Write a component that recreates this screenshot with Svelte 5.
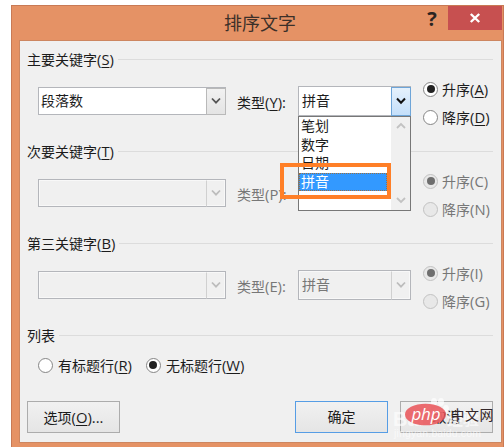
<script>
    // Los tres niveles de ordenación del diálogo
    const levels = [
        { title: '主要关键字', key: 'S', field: '段落数', typeKey: 'Y', type: '拼音', asc: 'A', desc: 'D', enabled: true },
        { title: '次要关键字', key: 'T', field: '', typeKey: 'P', type: '', asc: 'C', desc: 'N', enabled: false },
        { title: '第三关键字', key: 'B', field: '', typeKey: 'E', type: '拼音', asc: 'I', desc: 'G', enabled: false }
    ];

    const options = ['笔划', '数字', '日期', '拼音'];
    let orders = $state(['asc', 'asc', 'asc']);
    let header = $state('none');
    let selected = $state('拼音');
</script>

{#snippet hot(key, enabled)}<span class="lat">({#if enabled}<u>{key}</u>{:else}{key}{/if})</span>{/snippet}

{#snippet arrow()}
    <span class="arrow">
        <svg width="10" height="8" viewBox="0 0 10 8"><path d="M1 1.5 L5 5.7 L9 1.5" /></svg>
    </span>
{/snippet}

{#snippet dot(on)}<span class="dot" class:on></span>{/snippet}

<div class="window">
    <header>
        <h1>排序文字</h1>
        <span class="help">?</span>
        <button class="close" aria-label="关闭">
            <svg width="12" height="10" viewBox="0 0 12 10"><path d="M1.8 1 L10.2 9 M10.2 1 L1.8 9" /></svg>
        </button>
    </header>

    <main>
        {#each levels as level, i}
            <section class:disabled={!level.enabled}>
                <h2><span>{level.title}{@render hot(level.key, true)}</span></h2>
                <div class="row">
                    <div class="combo field"><span class="value">{level.field}</span>{@render arrow()}</div>
                    <span class="label">类型{@render hot(level.typeKey, level.enabled)}<span class="lat">:</span></span>
                    <div class="combo type" class:open={level.enabled}>
                        <span class="value">{i === 0 ? selected : level.type}</span>{@render arrow()}
                        {#if level.enabled}
                            <div class="list">
                                <div class="items">
                                    {#each options as option}
                                        <button class="item" class:selected={option === selected} onclick={() => (selected = option)}>{option}</button>
                                    {/each}
                                </div>
                                <div class="scroll">
                                    <svg width="10" height="8" viewBox="0 0 10 8"><path d="M1 6 L5 2 L9 6" /></svg>
                                    <svg width="10" height="8" viewBox="0 0 10 8"><path d="M1 2 L5 6 L9 2" /></svg>
                                </div>
                                <div class="mark"></div>
                            </div>
                        {/if}
                    </div>
                    <div class="radios">
                        <button class="radio" onclick={() => (orders[i] = 'asc')}>{@render dot(orders[i] === 'asc')}<span>升序{@render hot(level.asc, level.enabled)}</span></button>
                        <button class="radio" onclick={() => (orders[i] = 'desc')}>{@render dot(orders[i] === 'desc')}<span>降序{@render hot(level.desc, level.enabled)}</span></button>
                    </div>
                </div>
            </section>
        {/each}

        <section class="table">
            <h2><span>列表</span></h2>
            <div class="header-rows">
                <button class="radio" onclick={() => (header = 'has')}>{@render dot(header === 'has')}<span>有标题行{@render hot('R', true)}</span></button>
                <button class="radio" onclick={() => (header = 'none')}>{@render dot(header === 'none')}<span>无标题行{@render hot('W', true)}</span></button>
            </div>
        </section>

        <footer>
            <button class="btn">选项{@render hot('O', true)}<span class="lat">...</span></button>
            <button class="btn ok">确定</button>
            <button class="btn cancel">取消
                <span class="baidu">
                    <svg width="100" height="46" viewBox="0 0 100 46">
                        <g class="paw">
                            <ellipse cx="41" cy="5" rx="3" ry="4" />
                            <ellipse cx="48" cy="5" rx="3" ry="4" />
                            <ellipse cx="35" cy="11" rx="3" ry="4" />
                            <ellipse cx="53" cy="12" rx="3" ry="4" />
                            <ellipse cx="44" cy="18" rx="7" ry="7" />
                        </g>
                        <text x="0" y="29" class="brand">Bai</text>
                        <text x="54" y="28" class="brand cn">经验</text>
                        <text x="1" y="40" class="url" textLength="87">jingyan.baidu.com</text>
                    </svg>
                </span>
                <span class="php">
                    <svg width="96" height="26" viewBox="0 0 96 26">
                        <ellipse cx="20.5" cy="12.5" rx="20.5" ry="10.8" />
                        <text x="6.5" y="18" class="logo" textLength="29">php</text>
                        <text x="45.5" y="17.5" class="site" textLength="43">中文网</text>
                    </svg>
                </span>
            </button>
        </footer>
    </main>
</div>

<style>
    :global(body) {
        background: #fff;
        overflow: hidden;
    }

    .window {
        box-sizing: border-box;
        width: 493px;
        height: 442px;
        margin: 5px 0 0 11px;
        padding: 0 1px 0 7px;
        background: #e59265;
        border: 1px solid #c87a55;
        border-bottom: none;
        color: #1c1c1c;
        font: 14px/20px "Open Sans", "Noto Sans CJK SC", sans-serif;
    }

    header {
        display: flex;
        height: 34px;
    }

    h1 {
        flex: 1;
        margin: 0;
        padding-left: 205px;
        color: #3c3029;
        font: 18px/32px "Noto Sans CJK SC", sans-serif;
    }

    .help {
        width: 32px;
        color: #2b2421;
        font: bold 20px/26px "Open Sans", sans-serif;
        text-align: center;
    }

    .close {
        display: flex;
        align-items: center;
        justify-content: center;
        width: 54px;
        height: 24px;
        background: #c75050;
    }

    .close path {
        fill: none;
        stroke: #fff;
        stroke-width: 2.4;
    }

    button {
        margin: 0;
        padding: 0;
        border: none;
        background: none;
        color: inherit;
        font: inherit;
    }

    main {
        box-sizing: border-box;
        height: 403px;
        padding: 9px 8px 0 7px;
        background: #f0f0f0;
        border: 1px solid #cd8660;
    }

    section {
        height: 92px;
    }

    h2 {
        display: flex;
        align-items: center;
        gap: 4px;
        margin: 0;
        height: 19px;
        font: inherit;
    }

    h2::after {
        content: '';
        flex: 1;
        height: 1px;
        background: #dcdcdc;
    }

    .lat {
        font-size: 14.8px;
    }

    u {
        text-underline-offset: 2px;
        text-decoration-thickness: 1px;
    }

    .row {
        display: flex;
        align-items: flex-start;
        padding: 10px 0 0 11px;
    }

    .combo {
        position: relative;
        display: flex;
        box-sizing: border-box;
        border: 1px solid #b4b6bb;
        background: #fff;
    }

    .field {
        width: 188px;
        height: 28px;
        margin-top: 8px;
    }

    .type {
        width: 113px;
        height: 30px;
        margin-top: 7px;
    }

    .value {
        flex: 1;
        padding-left: 2px;
        line-height: 25px;
    }

    .type .value {
        padding-left: 3px;
        line-height: 28px;
    }

    .arrow {
        display: flex;
        align-items: center;
        justify-content: center;
        width: 18px;
        border: 1px solid #b9b9b9;
        margin: -0.5px;
        background: linear-gradient(#f1f1f1, #e4e4e4);
    }

    .arrow path,
    .scroll path {
        fill: none;
        stroke: #555;
        stroke-width: 1.8;
    }

    .open .arrow {
        border-color: #6ea5d8;
        background: linear-gradient(#e5f1fc, #c4dffa);
    }

    .open .arrow path {
        stroke: #111;
        stroke-width: 2;
    }

    .label {
        box-sizing: border-box;
        flex: 0 0 72px;
        padding-left: 11px;
        margin-top: 13px;
        white-space: nowrap;
    }

    .disabled .row {
        color: #777;
    }

    .disabled .combo {
        background: #f0f0f0;
        box-shadow: inset 0 0 0 1px #f8f8f8;
    }

    .disabled .arrow {
        border-color: transparent transparent transparent #d0d0d0;
        background: none;
    }

    .disabled .arrow path {
        stroke: #bcbcbc;
    }

    .radios {
        display: flex;
        flex-direction: column;
        gap: 8px;
        padding-left: 12px;
    }

    .radio {
        display: flex;
        align-items: center;
        gap: 5px;
        height: 20px;
        white-space: nowrap;
    }

    .radios .radio {
        gap: 4px;
    }

    .dot {
        display: flex;
        align-items: center;
        justify-content: center;
        box-sizing: border-box;
        width: 15px;
        height: 15px;
        border: 1px solid #858585;
        border-radius: 50%;
        background: #fff;
    }

    .dot.on::after {
        content: '';
        width: 8px;
        height: 8px;
        border-radius: 50%;
        background: #222;
    }

    .disabled .dot {
        border-color: #c2c2c2;
        background: #e8e8e8;
    }

    .disabled .dot.on::after {
        background: #6e6e6e;
    }

    /* Lista desplegada sobre el resto del formulario */
    .list {
        position: absolute;
        z-index: 2;
        top: 29px;
        left: -1px;
        display: flex;
        box-sizing: border-box;
        width: 113px;
        height: 95px;
        border: 1px solid #777;
        background: #fff;
    }

    .items {
        display: flex;
        flex-direction: column;
        flex: 1;
    }

    .item {
        width: 88px;
        height: 18.6px;
        padding-left: 2px;
        line-height: 18px;
        text-align: left;
    }

    .item.selected {
        background: #3399ff;
        color: #fff;
        outline: 1px dotted #9a7144;
        outline-offset: -1px;
    }

    .scroll {
        display: flex;
        flex-direction: column;
        align-items: center;
        justify-content: space-between;
        box-sizing: border-box;
        width: 19px;
        padding: 5px 0 6px;
        background: #f0f0f0;
    }

    .scroll path {
        stroke: #c2c2c2;
    }

    .mark {
        position: absolute;
        top: 46px;
        left: -19px;
        box-sizing: border-box;
        width: 111px;
        height: 36px;
        border: 4.5px solid #ff7f27;
    }

    .table {
        height: 75px;
    }

    .header-rows {
        display: flex;
        gap: 14px;
        padding: 10px 0 0 11px;
    }

    footer {
        display: flex;
        gap: 12px;
    }

    .btn {
        position: relative;
        box-sizing: border-box;
        width: 93px;
        height: 32px;
        border: 1px solid #acacac;
        background: linear-gradient(#f1f1f1, #e5e5e5);
        white-space: nowrap;
    }

    .ok {
        margin-left: auto;
        border-color: #569de5;
    }

    .baidu,
    .php {
        position: absolute;
        display: flex;
    }

    .baidu {
        top: -5px;
        left: -8px;
    }

    .paw {
        fill: #fff;
        opacity: 0.7;
    }

    .brand {
        fill: #fff;
        fill-opacity: 0.65;
        font: bold 20px "Liberation Sans", sans-serif;
    }

    .brand.cn {
        font: bold 16px "Noto Sans CJK SC", sans-serif;
    }

    .url {
        fill: #fff;
        fill-opacity: 0.6;
        font: 10.5px "Liberation Sans", sans-serif;
    }

    .php {
        top: 0;
        left: 4px;
    }

    .php ellipse {
        fill: #e8484e;
        fill-opacity: 0.8;
    }

    .logo {
        fill: #fff;
        font: italic 17px "Open Sans", sans-serif;
    }

    .site {
        fill: #33272a;
        font: 14px "Noto Sans CJK SC", sans-serif;
    }
</style>
